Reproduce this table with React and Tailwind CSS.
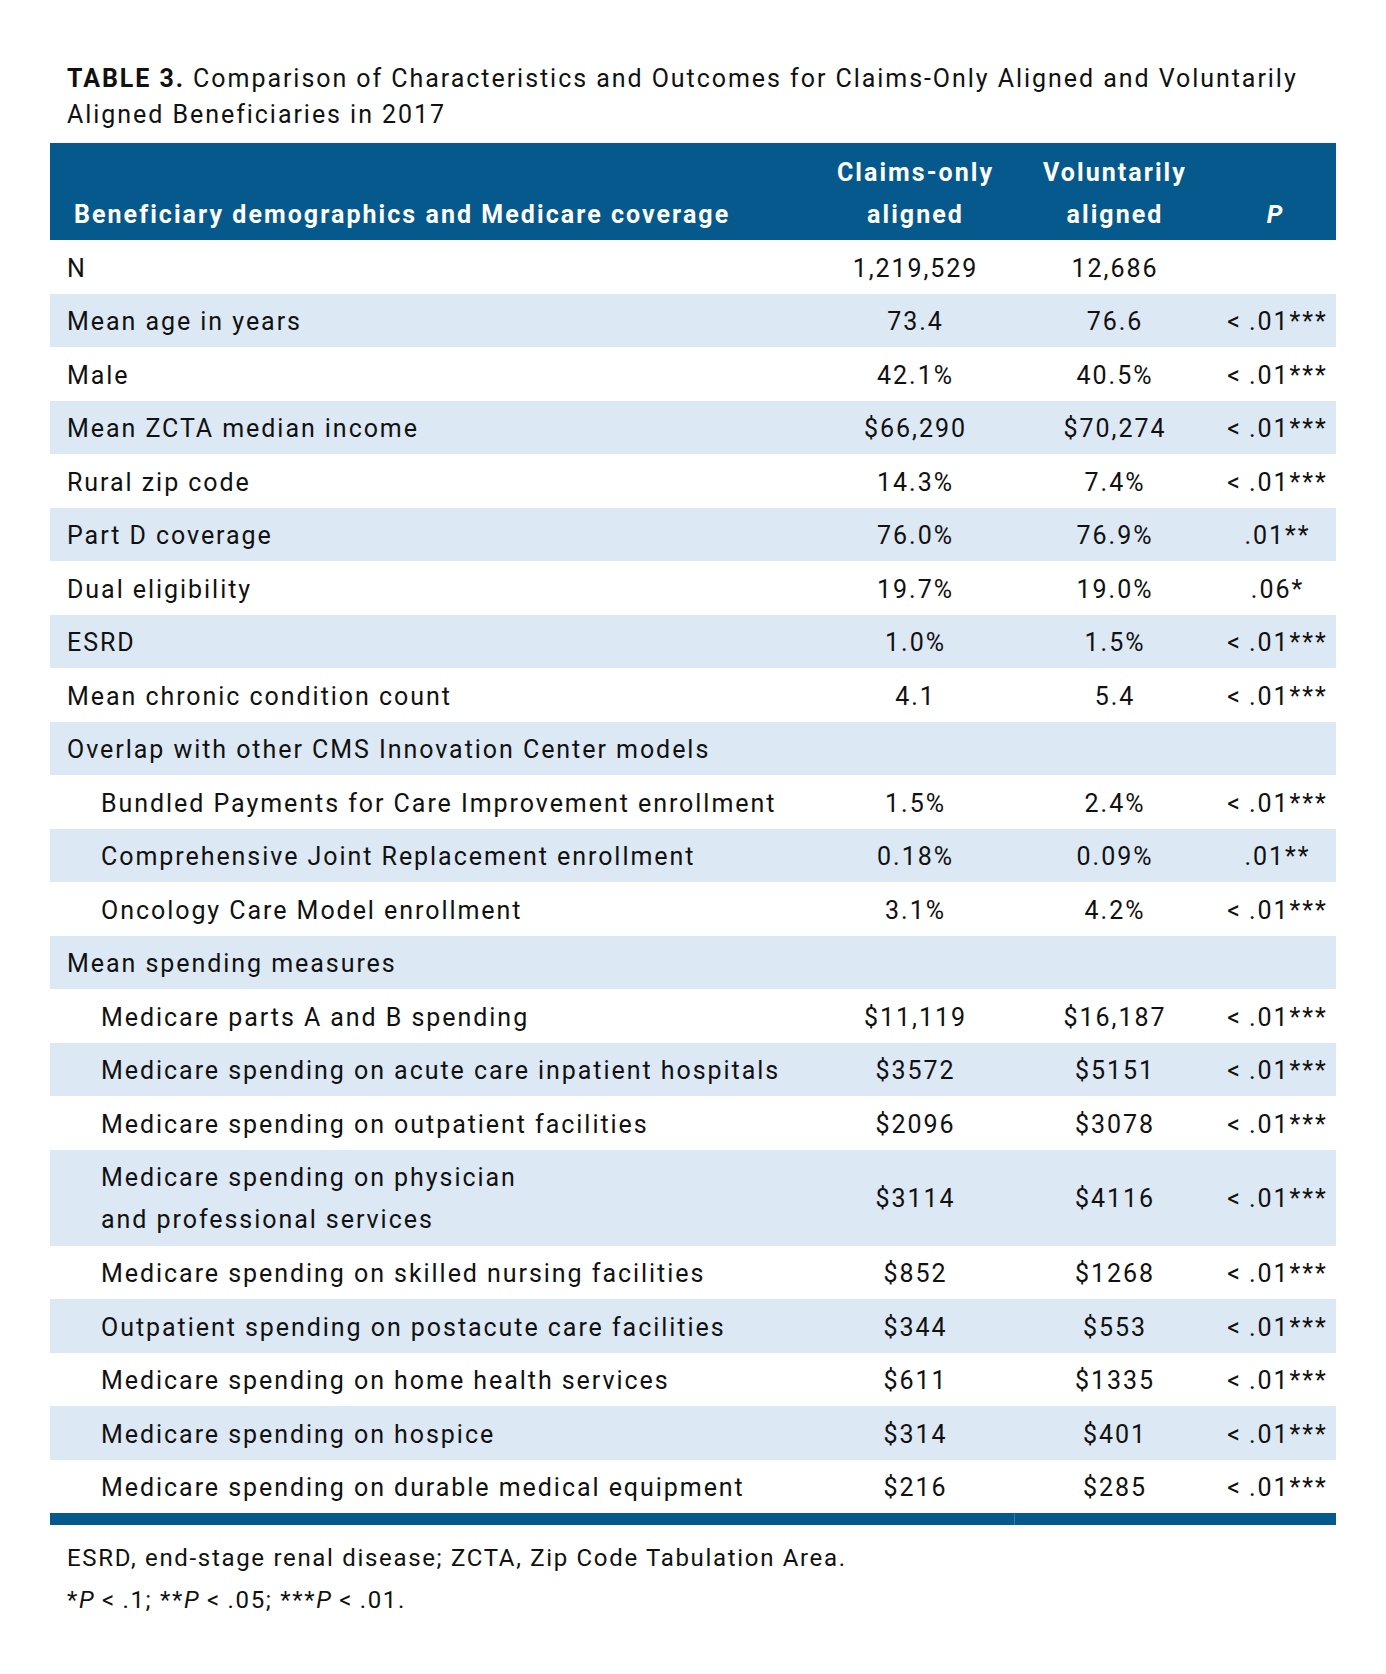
import React from "react";

const L = "<\u2009.01***";

const rows = [
  { l: "N", a: "1,219,529", b: "12,686", p: "" },
  { l: "Mean age in years", a: "73.4", b: "76.6", p: L },
  { l: "Male", a: "42.1%", b: "40.5%", p: L },
  { l: "Mean ZCTA median income", a: "$66,290", b: "$70,274", p: L },
  { l: "Rural zip code", a: "14.3%", b: "7.4%", p: L },
  { l: "Part D coverage", a: "76.0%", b: "76.9%", p: ".01**" },
  { l: "Dual eligibility", a: "19.7%", b: "19.0%", p: ".06*" },
  { l: "ESRD", a: "1.0%", b: "1.5%", p: L },
  { l: "Mean chronic condition count", a: "4.1", b: "5.4", p: L },
  { l: "Overlap with other CMS Innovation Center models", a: "", b: "", p: "" },
  { l: "Bundled Payments for Care Improvement enrollment", a: "1.5%", b: "2.4%", p: L, i: true },
  { l: "Comprehensive Joint Replacement enrollment", a: "0.18%", b: "0.09%", p: ".01**", i: true },
  { l: "Oncology Care Model enrollment", a: "3.1%", b: "4.2%", p: L, i: true },
  { l: "Mean spending measures", a: "", b: "", p: "" },
  { l: "Medicare parts A and B spending", a: "$11,119", b: "$16,187", p: L, i: true },
  { l: "Medicare spending on acute care inpatient hospitals", a: "$3572", b: "$5151", p: L, i: true },
  { l: "Medicare spending on outpatient facilities", a: "$2096", b: "$3078", p: L, i: true },
  { l: ["Medicare spending on physician", "and professional services"], a: "$3114", b: "$4116", p: L, i: true, d: true },
  { l: "Medicare spending on skilled nursing facilities", a: "$852", b: "$1268", p: L, i: true },
  { l: "Outpatient spending on postacute care facilities", a: "$344", b: "$553", p: L, i: true },
  { l: "Medicare spending on home health services", a: "$611", b: "$1335", p: L, i: true },
  { l: "Medicare spending on hospice", a: "$314", b: "$401", p: L, i: true },
  { l: "Medicare spending on durable medical equipment", a: "$216", b: "$285", p: L, i: true },
];

export default function App() {
  return (
    <div
      className="w-[1386px] h-[1674px] bg-white text-[#111111] pt-[61px]"
      style={{ fontFamily: "Roboto, 'Liberation Sans', sans-serif" }}
    >
      <div className="pl-[67px] pr-[20px] text-[25px] leading-[36px] tracking-[0.078em] whitespace-nowrap">
        <span className="font-bold">TABLE 3.</span> Comparison of Characteristics and Outcomes for Claims-Only Aligned and Voluntarily
        <br />
        Aligned Beneficiaries in 2017
      </div>
      <div className="ml-[50px] w-[1286px] mt-[10px]">
        <div className="flex h-[97px] bg-[#05598c] text-white font-bold text-[25px] leading-[42px] tracking-[0.082em]">
          <div className="w-[766px] pl-[24px] flex items-end pb-[4px] whitespace-nowrap">
            Beneficiary demographics and Medicare coverage
          </div>
          <div className="w-[199px] flex flex-col justify-end items-center pb-[4px]">
            <div>Claims-only</div>
            <div>aligned</div>
          </div>
          <div className="w-[200px] flex flex-col justify-end items-center pb-[4px]">
            <div>Voluntarily</div>
            <div>aligned</div>
          </div>
          <div className="w-[121px] flex items-end justify-center pb-[4px] italic">P</div>
        </div>
        {rows.map((r, idx) => (
          <div
            key={idx}
            className={
              "flex items-center text-[25px] tracking-[0.078em] pt-[3px] whitespace-nowrap " +
              (r.d ? "h-[96px] leading-[42px] " : "h-[53.5px] ") +
              (idx % 2 === 1 ? "bg-[#dce8f4]" : "bg-white")
            }
          >
            <div className={"w-[766px] " + (r.i ? "pl-[51px]" : "pl-[17px]")}>
              {Array.isArray(r.l) ? (
                <>
                  <div>{r.l[0]}</div>
                  <div>{r.l[1]}</div>
                </>
              ) : (
                r.l
              )}
            </div>
            <div className="w-[199px] text-center">{r.a}</div>
            <div className="w-[200px] text-center">{r.b}</div>
            <div className="w-[121px] text-center pl-[4px]">{r.p}</div>
          </div>
        ))}
        <div className="flex h-[12px] bg-[#05598c]">
          <div className="w-[965px] border-r border-[#3a7aa6]" />
          <div className="flex-1" />
        </div>
      </div>
      <div className="pl-[67px] mt-[12px] text-[24px] leading-[42px] tracking-[0.07em]">
        <div>ESRD, end-stage renal disease; ZCTA, Zip Code Tabulation Area.</div>
        <div>
          *<i>P</i>&#8201;&lt;&#8201;.1; **<i>P</i>&#8201;&lt;&#8201;.05; ***<i>P</i>&#8201;&lt;&#8201;.01.
        </div>
      </div>
    </div>
  );
}
